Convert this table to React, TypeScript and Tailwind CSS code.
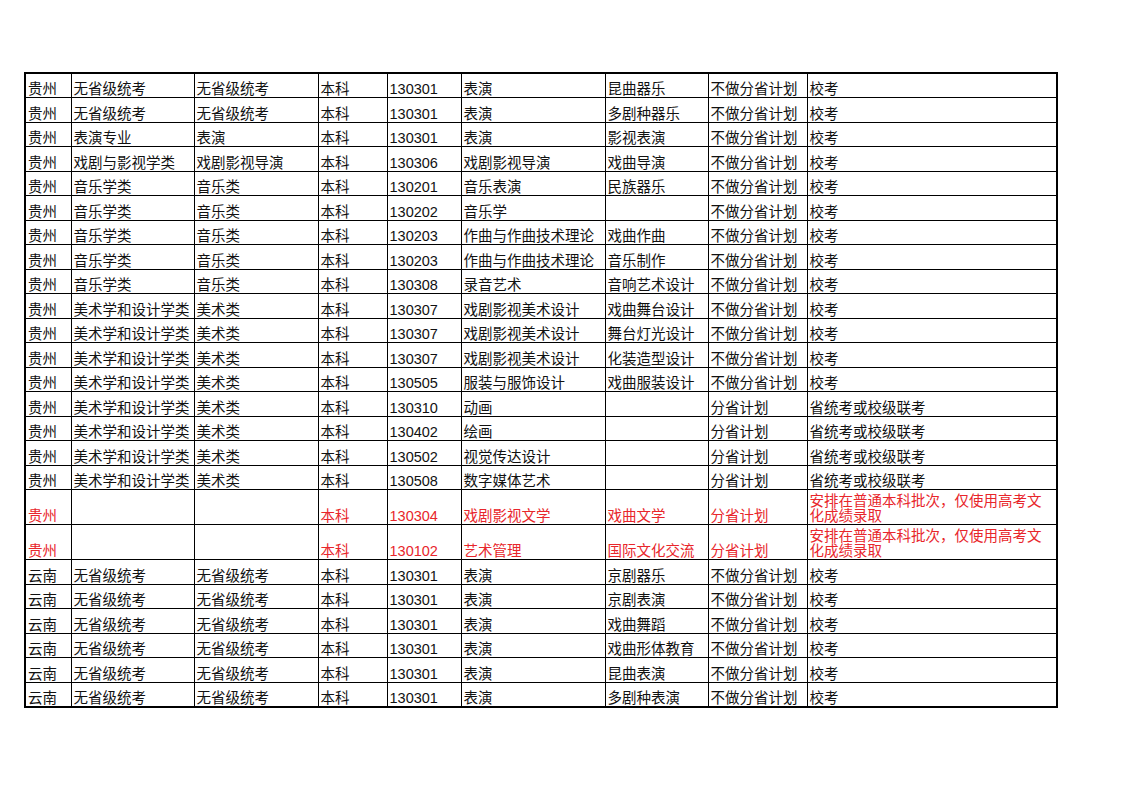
import React from 'react';

type Row = {
    cells: string[];
    red?: boolean;
    tall?: boolean;
};

const GZ_ART = '美术学和设计学类';

const rows: Row[] = [
    { cells: ['贵州', '无省级统考', '无省级统考', '本科', '130301', '表演', '昆曲器乐', '不做分省计划', '校考'] },
    { cells: ['贵州', '无省级统考', '无省级统考', '本科', '130301', '表演', '多剧种器乐', '不做分省计划', '校考'] },
    { cells: ['贵州', '表演专业', '表演', '本科', '130301', '表演', '影视表演', '不做分省计划', '校考'] },
    { cells: ['贵州', '戏剧与影视学类', '戏剧影视导演', '本科', '130306', '戏剧影视导演', '戏曲导演', '不做分省计划', '校考'] },
    { cells: ['贵州', '音乐学类', '音乐类', '本科', '130201', '音乐表演', '民族器乐', '不做分省计划', '校考'] },
    { cells: ['贵州', '音乐学类', '音乐类', '本科', '130202', '音乐学', '', '不做分省计划', '校考'] },
    { cells: ['贵州', '音乐学类', '音乐类', '本科', '130203', '作曲与作曲技术理论', '戏曲作曲', '不做分省计划', '校考'] },
    { cells: ['贵州', '音乐学类', '音乐类', '本科', '130203', '作曲与作曲技术理论', '音乐制作', '不做分省计划', '校考'] },
    { cells: ['贵州', '音乐学类', '音乐类', '本科', '130308', '录音艺术', '音响艺术设计', '不做分省计划', '校考'] },
    { cells: ['贵州', GZ_ART, '美术类', '本科', '130307', '戏剧影视美术设计', '戏曲舞台设计', '不做分省计划', '校考'] },
    { cells: ['贵州', GZ_ART, '美术类', '本科', '130307', '戏剧影视美术设计', '舞台灯光设计', '不做分省计划', '校考'] },
    { cells: ['贵州', GZ_ART, '美术类', '本科', '130307', '戏剧影视美术设计', '化装造型设计', '不做分省计划', '校考'] },
    { cells: ['贵州', GZ_ART, '美术类', '本科', '130505', '服装与服饰设计', '戏曲服装设计', '不做分省计划', '校考'] },
    { cells: ['贵州', GZ_ART, '美术类', '本科', '130310', '动画', '', '分省计划', '省统考或校级联考'] },
    { cells: ['贵州', GZ_ART, '美术类', '本科', '130402', '绘画', '', '分省计划', '省统考或校级联考'] },
    { cells: ['贵州', GZ_ART, '美术类', '本科', '130502', '视觉传达设计', '', '分省计划', '省统考或校级联考'] },
    { cells: ['贵州', GZ_ART, '美术类', '本科', '130508', '数字媒体艺术', '', '分省计划', '省统考或校级联考'] },
    { cells: ['贵州', '', '', '本科', '130304', '戏剧影视文学', '戏曲文学', '分省计划', '安排在普通本科批次，仅使用高考文化成绩录取'], red: true, tall: true },
    { cells: ['贵州', '', '', '本科', '130102', '艺术管理', '国际文化交流', '分省计划', '安排在普通本科批次，仅使用高考文化成绩录取'], red: true, tall: true },
    { cells: ['云南', '无省级统考', '无省级统考', '本科', '130301', '表演', '京剧器乐', '不做分省计划', '校考'] },
    { cells: ['云南', '无省级统考', '无省级统考', '本科', '130301', '表演', '京剧表演', '不做分省计划', '校考'] },
    { cells: ['云南', '无省级统考', '无省级统考', '本科', '130301', '表演', '戏曲舞蹈', '不做分省计划', '校考'] },
    { cells: ['云南', '无省级统考', '无省级统考', '本科', '130301', '表演', '戏曲形体教育', '不做分省计划', '校考'] },
    { cells: ['云南', '无省级统考', '无省级统考', '本科', '130301', '表演', '昆曲表演', '不做分省计划', '校考'] },
    { cells: ['云南', '无省级统考', '无省级统考', '本科', '130301', '表演', '多剧种表演', '不做分省计划', '校考'] },
];

// column widths measured off the sheet
const colWidths = ['w-[46px]', 'w-[123px]', 'w-[124px]', 'w-[69px]', 'w-[74px]', 'w-[144px]', 'w-[103px]', 'w-[99px]', 'w-[250px]'];

export default function App() {
    return (
        <div
            className="w-[1123px] h-[794px] bg-white pt-[72px] pl-[24px]"
            style={{ fontFamily: '"Liberation Sans", "Noto Sans CJK SC", sans-serif' }}
        >
            <table className="border-collapse table-fixed w-[1032px] border-2 border-black text-[14.5px] text-[#111]">
                <colgroup>
                    {colWidths.map((w, i) => (
                        <col key={i} className={w} />
                    ))}
                </colgroup>
                <tbody>
                    {rows.map((row, ri) => (
                        <tr key={ri} className={row.tall ? 'h-[35px]' : 'h-[24.5px]'}>
                            {row.cells.map((c, ci) => {
                                const wrap = ci === 8 && row.tall;
                                return (
                                    <td
                                        key={ci}
                                        className={`border border-black align-bottom pl-[2px] pb-0 leading-[15px] ${
                                            wrap ? 'whitespace-normal break-all pr-[4px]' : 'whitespace-nowrap'
                                        } ${row.red ? 'text-[#e8262b]' : ''}`}
                                    >
                                        {c}
                                    </td>
                                );
                            })}
                        </tr>
                    ))}
                </tbody>
            </table>
        </div>
    );
}
